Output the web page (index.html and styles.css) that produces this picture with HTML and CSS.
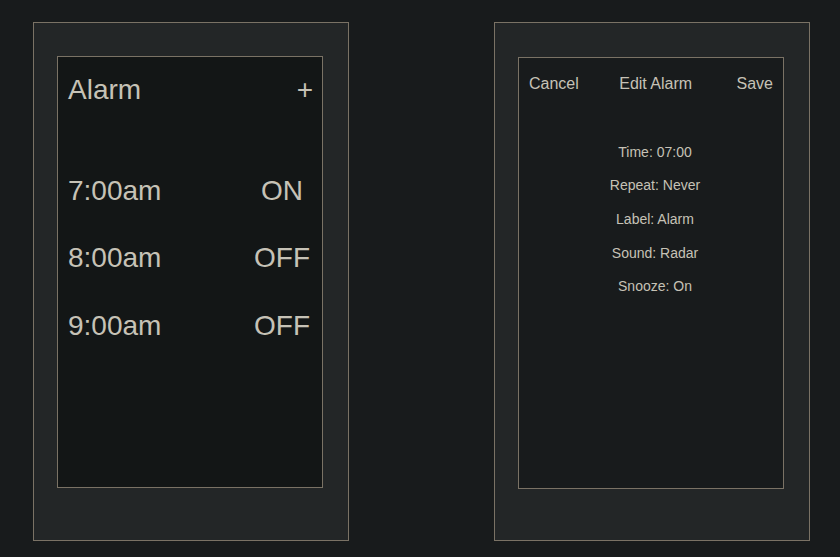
FILE: index.html
```html
<!DOCTYPE html>
<html lang="en">
<head>
<meta charset="utf-8">
<title>Alarm</title>
<link rel="stylesheet" href="styles.css">
</head>
<body>
<main class="screens">
  <section class="device device-left">
    <div class="screen screen-list">
      <header class="list-header">
        <h1 class="list-title">Alarm</h1>
        <span class="add-btn">+</span>
      </header>
      <ul class="alarm-list">
        <li class="alarm-row"><span class="alarm-time">7:00am</span><span class="alarm-state">ON</span></li>
        <li class="alarm-row"><span class="alarm-time">8:00am</span><span class="alarm-state">OFF</span></li>
        <li class="alarm-row"><span class="alarm-time">9:00am</span><span class="alarm-state">OFF</span></li>
      </ul>
    </div>
  </section>
  <section class="device device-right">
    <div class="screen screen-edit">
      <header class="edit-header">
        <span class="edit-action">Cancel</span>
        <span class="edit-title">Edit Alarm</span>
        <span class="edit-action">Save</span>
      </header>
      <ul class="detail-list">
        <li class="detail">Time: 07:00</li>
        <li class="detail">Repeat: Never</li>
        <li class="detail">Label: Alarm</li>
        <li class="detail">Sound: Radar</li>
        <li class="detail">Snooze: On</li>
      </ul>
    </div>
  </section>
</main>
</body>
</html>
```

FILE: styles.css
```css
* { box-sizing: border-box; }

html, body {
  margin: 0;
  padding: 0;
  background: #181b1c;
  color: #c6c2b6;
  font-family: "Liberation Sans", Arial, sans-serif;
}

.screens {
  display: flex;
  align-items: flex-start;
  gap: 145px;
  padding: 22px 0 0 33px;
}

.device {
  width: 316px;
  height: 519px;
  background: #232627;
  border: 1px solid #7a7265;
  padding: 33px 0 0 23px;
}

.device-right {
  padding-top: 34px;
}

.screen {
  width: 266px;
  height: 432px;
  border: 1px solid #7a7265;
}

.screen-list {
  background: #131616;
  padding: 16.5px 10px 0 10px;
}

.list-header {
  display: flex;
  justify-content: space-between;
  align-items: center;
}

.list-title {
  margin: 0;
  font-size: 28px;
  line-height: 32px;
  font-weight: normal;
}

.add-btn {
  font-size: 28px;
  line-height: 32px;
  margin-right: -1px;
}

.alarm-list {
  list-style: none;
  margin: 69px 0 0 0;
  padding: 0;
  display: flex;
  flex-direction: column;
  gap: 35.5px;
}

.alarm-row {
  display: flex;
  justify-content: space-between;
  font-size: 28px;
  line-height: 32px;
}

.alarm-state {
  width: 56px;
  margin-right: 2px;
  text-align: center;
}

.screen-edit {
  background: #181b1c;
  padding: 17.2px 10px 0 10px;
}

.edit-header {
  display: flex;
  justify-content: space-between;
  font-size: 16px;
  line-height: 18px;
}

.edit-title {
  margin-right: 4px;
}

.detail-list {
  list-style: none;
  margin: 50.7px 0 0 0;
  padding: 0 0 0 8px;
  display: flex;
  flex-direction: column;
  gap: 17.6px;
  font-size: 14px;
  line-height: 16px;
  text-align: center;
}
```
